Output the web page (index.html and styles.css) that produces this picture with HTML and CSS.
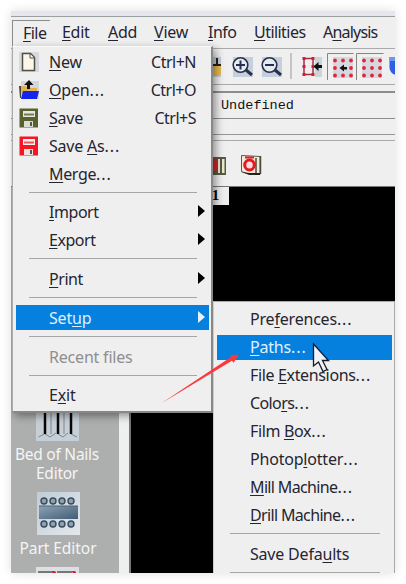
FILE: index.html
```html
<!DOCTYPE html>
<html lang="en">
<head>
<meta charset="utf-8">
<title>Setup paths</title>
<link rel="stylesheet" href="styles.css">
</head>
<body>
<div class="window">
  <div class="titlebar"></div>
  <nav class="menubar">
    <span class="tab open"><u>F</u>ile</span><span class="tab edit"><u>E</u>dit</span><span class="tab add"><u>A</u>dd</span><span class="tab view"><u>V</u>iew</span><span class="tab info"><u>I</u>nfo</span><span class="tab util"><u>U</u>tilities</span><span class="tab ana">A<u>n</u>alysis</span>
  </nav>
  <div class="toolbar">
    <svg width="184" height="35" viewBox="0 0 184 35">
      <rect x="0" y="8" width="8" height="20" fill="#c5ced9"/><path d="M3 9h2v6h3v3H0v-3h3z" fill="#222"/><path d="M0 17h8v8l-3 2H0z" fill="#e9b950"/>
      <g fill="none" stroke="#26304e" stroke-width="1.600"><path fill="#c5d0dc" stroke="none" d="M20 8h20v20H20zM49 8h20v20H49z"/><circle cx="27.500" cy="16" r="7.300" fill="#e6ebf2"/><circle cx="56.500" cy="16" r="7.300" fill="#e6ebf2"/><path d="M23 16h9M27.500 11.500v9M52 16h9" stroke-width="2"/><path d="M33 21l6 5M62 21l6 5" stroke-width="3"/></g>
      <path d="M78 4v26" stroke="#999"/>
      <path d="M102 8h7v20h-7z" fill="#cbd3db"/><path d="M91 9.500h9M91 25.500h9M91 9v17M100 9v17" stroke="#a0303f" stroke-width="1.500"/><path fill="#e51431" d="M89.500 8h3v3h-3zM98.500 8h3v3h-3zM89.500 16h3v3h-3zM98.500 16h3v3h-3zM89.500 24h3v3h-3zM98.500 24h3v3h-3z"/><path d="M100.500 17.500l5-4.500v3h3.500v3h-3.500v3z" fill="#111"/>
      <path d="M114.500 31V4.500h26M143.500 31V4.500h27" stroke="#858585" fill="none"/><path d="M120 8h20v21h-20zM149 8h20v21h-20z" fill="#d5d9df"/>
      <g fill="#e4243c"><circle cx="122" cy="11.500" r="1.900"/><circle cx="130" cy="11.500" r="1.900"/><circle cx="138" cy="11.500" r="1.900"/><circle cx="122" cy="19" r="1.900"/><circle cx="138" cy="19" r="1.900"/><circle cx="122" cy="26.500" r="1.900"/><circle cx="130" cy="26.500" r="1.900"/><circle cx="138" cy="26.500" r="1.900"/><circle cx="151" cy="11.500" r="1.900"/><circle cx="159" cy="11.500" r="1.900"/><circle cx="167" cy="11.500" r="1.900"/><circle cx="151" cy="19" r="1.900"/><circle cx="159" cy="19" r="1.900"/><circle cx="167" cy="19" r="1.900"/><circle cx="151" cy="26.500" r="1.900"/><circle cx="159" cy="26.500" r="1.900"/><circle cx="167" cy="26.500" r="1.900"/></g>
      <path d="M126.500 19l4.500-3.500V18h3v2.500h-3v2z" fill="#111"/><path d="M176.500 8h7.500v18c-4 0-7.500-3-7.500-8z" fill="#2f5fe0"/><path d="M176.500 8h7.500v4h-7.500z" fill="#6e96ee"/>
    </svg>
  </div>
  <div class="gap-a"></div>
  <div class="field">Undefined</div>
  <div class="gap-b"></div>
  <div class="gap-c"></div>
  <div class="toolbar-2">
    <svg width="60" height="45" viewBox="0 0 60 45">
      <path d="M0 16h13v18H0z" fill="#555b47"/><path d="M5 18h2v14H5zM9 18h2.500v14H9z" fill="#efe9cd"/><path d="M0 17c6 0 6 14 0 14z" fill="#d9242b"/>
      <path d="M28.500 14.500v16l8 3h10.500v-18z" fill="#f2eadb" stroke="#555b47"/><path d="M43 17v15M47.500 15v18" stroke="#474d38" stroke-width="1.500"/><path d="M28 31l9 3h10v-2H37z" fill="#222"/><ellipse cx="36.500" cy="24" rx="4.800" ry="5" fill="#f7dddd" stroke="#e61820" stroke-width="3"/><path d="M32 15.500h9v2h-9z" fill="#e61820"/>
    </svg>
  </div>
  <div class="workspace">
    <aside class="sidebar">
      <svg width="43" height="42" viewBox="0 0 43 42"><path d="M0 0h43v42H0z" fill="#c7cfd6"/><path d="M8.500 35l-6 3M9 35l5 3 6-4M22 35l5 3 5-4M35 35l6 3M15 0v35M28 0v35" fill="none" stroke="#7b8790" stroke-width="1"/><path d="M9 0v35M22 0v35M35 0v35" stroke="#080808" stroke-width="2.500"/></svg>
      <div class="caption nails">Bed of Nails<br>Editor</div>
      <svg class="chip" width="43" height="43" viewBox="0 0 43 43"><defs><linearGradient id="paper" x2="1" y2="1"><stop stop-color="#c0ccd7"/><stop offset="1" stop-color="#e4e8ec"/></linearGradient><linearGradient id="body" x2="1" y2="1"><stop stop-color="#8ca2b5"/><stop offset="1" stop-color="#415c75"/></linearGradient></defs><path d="M0 0h43v43H0z" fill="url(#paper)"/><path d="M2 14h39v13H2z" fill="url(#body)"/><path d="M2 14h39" stroke="#50606c"/><g fill="#8da1b1" stroke="#364b5e" stroke-width="1.400"><circle cx="7" cy="9" r="3"/><circle cx="16" cy="9" r="3"/><circle cx="25" cy="9" r="3"/><circle cx="34" cy="9" r="3"/><circle cx="7" cy="32" r="3"/><circle cx="16" cy="32" r="3"/><circle cx="25" cy="32" r="3"/><circle cx="34" cy="32" r="3"/></g></svg>
      <div class="caption part">Part Editor</div>
      <svg class="last" width="43" height="7" viewBox="0 0 43 7"><path d="M0 0h43v7H0z" fill="#dce0e2"/><path d="M2 4h16v3H2zM21 4h15v3H21z" fill="#777"/><path d="M16 4h3l2 3h-4zM36 4h3l2 3h-4z" fill="#e51728"/></svg>
    </aside>
    <div class="splitter"></div>
    <main class="canvas"><span class="layer">1</span></main>
  </div>

  <div class="menu file-menu">
    <div class="item"><svg class="icon" viewBox="0 0 20 20"><path d="M0 0h20v20H0z" fill="#d6dadd"/><path d="M3.500 1.500h8l4 4v13h-12z" fill="#fcf5e8" stroke="#50504a" stroke-width="1.500"/><path d="M11 2v4h4" fill="#fff" stroke="#50504a"/></svg><span class="name"><u>N</u>ew</span><kbd>Ctrl+N</kbd></div>
    <div class="item"><svg class="icon" viewBox="0 0 20 20"><path d="M2 1h18v18H2z" fill="#d1d6df"/><path d="M1 6h6l2 2h9v8H3z" fill="#dfb44d"/><path d="M0 6h2v12H1z" fill="#4a4532"/><path d="M4 11h16l-2 8H2z" fill="#1523ee"/><path d="M10 0l4.500 5H11v4H8V5H5z" fill="#111"/></svg><span class="name"><u>O</u>pen<b>...</b></span><kbd>Ctrl+O</kbd></div>
    <div class="item"><svg class="icon" viewBox="0 0 20 20"><path d="M.5.500h18.500v19H.5z" fill="#59612e"/><path d="M4 3h12v6H4z" fill="#e5e8df"/><path d="M5 5.500h10v2H5z" fill="#747d4c"/><path d="M5 13h9v6H5z" fill="#dcded4"/><path d="M11 14h2v4h-2z" fill="#555"/></svg><span class="name"><u>S</u>ave</span><kbd>Ctrl+S</kbd></div>
    <div class="item"><svg class="icon" viewBox="0 0 20 20"><path d="M.5.500h18.500v19H.5z" fill="#f51525"/><path d="M4 3h12v6H4z" fill="#faf3ee"/><path d="M5 5.500h10v2H5z" fill="#f54e57"/><path d="M5 13h9v6H5z" fill="#eee4db"/><path d="M11 14h2v4h-2z" fill="#555"/></svg><span class="name">Save <u>A</u>s<b>...</b></span></div>
    <div class="item"><span class="name merge"><u>M</u>erge<b>...</b></span></div>
    <hr>
    <div class="item"><span class="name import"><u>I</u>mport</span><i class="arrow"></i></div>
    <div class="item"><span class="name import"><u>E</u>xport</span><i class="arrow"></i></div>
    <hr>
    <div class="item"><span class="name import"><u>P</u>rint</span><i class="arrow"></i></div>
    <hr>
    <div class="item active"><span class="name">Set<u>u</u>p</span><i class="arrow"></i></div>
    <hr>
    <div class="item disabled"><span class="name">Recent files</span></div>
    <hr>
    <div class="item"><span class="name">E<u>x</u>it</span></div>
  </div>

  <div class="menu setup-menu">
    <div class="item"><span class="name">Pre<u>f</u>erences<b>...</b></span></div>
    <div class="item active"><span class="name"><u>P</u>aths<b>...</b></span></div>
    <div class="item"><span class="name ext">File <u>E</u>xtensions<b>...</b></span></div>
    <div class="item"><span class="name colors">Colo<u>r</u>s<b>...</b></span></div>
    <div class="item"><span class="name ext">Film <u>B</u>ox<b>...</b></span></div>
    <div class="item"><span class="name">Photop<u>l</u>otter<b>...</b></span></div>
    <div class="item"><span class="name mill"><u>M</u>ill Machine<b>...</b></span></div>
    <div class="item"><span class="name mill"><u>D</u>rill Machine<b>...</b></span></div>
    <hr>
    <div class="item"><span class="name">Save Defa<u>u</u>lts</span></div>
    <hr>
  </div>
  <svg class="pointer-layer" width="384" height="562" viewBox="11 11 384 562"><path d="M161 403.500L231 357l-1-2 9-.2-5.500 8-1.500-2z" fill="#fb383c"/><path d="M313.500 344v22l5-4 4.500 9.500 4-2-4.500-9h6z" fill="#f1f2f5" stroke="#151a29" stroke-width="1.300"/></svg>
</div>
</body>
</html>
```
FILE: styles.css
```css
* { box-sizing: border-box; }
body { margin: 0; padding: 11px; background: #fff; font: 16px/20px "Noto Sans", sans-serif; letter-spacing: -.2px; color: #252530; }
b { font-weight: inherit; letter-spacing: .9px; }
u { text-decoration-thickness: 1px; text-underline-offset: 2px; text-decoration-skip-ink: none; }
svg { display: block; flex: none; }
.window { position: relative; width: 384px; height: 562px; overflow: hidden; background: #f0eff0; display: flex; flex-direction: column; }
body::before { content: ""; position: absolute; left: 11px; top: 11px; width: 384px; height: 562px; box-shadow: 0 0 10px #0002; }
.titlebar { height: 6px; background: #e7e6ee; border-bottom: 1px solid #9a9f9f; }
.menubar { height: 31px; display: flex; padding: 3px 0 0 1px; white-space: nowrap; letter-spacing: -.55px; }
.tab { width: 45px; padding: 2px 0 0 6px; }
.tab.open { width: 38px; padding: 2px 0 0 10px; border: solid #8c8c8c; border-width: 1px 0 0 1px; }
.tab.edit { width: 52px; padding-left: 12px; letter-spacing: -.3px; }
.tab.add { width: 46px; letter-spacing: -.3px; }
.tab.view { width: 54px; letter-spacing: -.2px; }
.tab.info { width: 46px; }
.tab.util { width: 69px; }
.tab.ana { letter-spacing: -.8px; }
.toolbar { height: 37px; border: solid #aaa; border-width: 1px 0; padding-left: 202px; }
.gap-a { height: 6px; }
.field { height: 28px; border: solid #8d8d8d; border-width: 2px 0 1px; padding: 4px 0 0 210px; font: 13.5px/17px "Liberation Mono", monospace; letter-spacing: 0; color: #111; }
.gap-b { height: 16px; border-bottom: 1px solid #969696; }
.gap-c { height: 6px; border-bottom: 1px solid #aaa; }
.toolbar-2 { height: 46px; padding-left: 202px; border-bottom: 1px solid #777; }
.workspace { display: flex; flex: 1; min-height: 0; }
.sidebar { width: 108px; background: #adaeae; color: #f5f5f5; display: flex; flex-direction: column; align-items: center; padding: 212px 16px 0 0; overflow: hidden; }
.caption { width: 94px; text-align: center; font-size: 15.5px; line-height: 19px; letter-spacing: -.25px; white-space: nowrap; margin-top: 4px; }
.caption.part { letter-spacing: -.05px; margin-left: 2px; }
.chip { margin: 9px 0 0 2px; }
.last { margin-top: 9px; }
.splitter { width: 12px; background: #f0eff0; border-right: 2px solid #777; }
.canvas { flex: 1; background: #000; }
.layer { display: block; width: 98px; height: 18px; background: #eee; text-align: right; padding-right: 10px; font: bold 15px/17px "Liberation Serif", serif; color: #000; }
.menu { position: absolute; background: #f0eff0; white-space: nowrap; }
.file-menu { left: 1px; top: 35px; width: 201px; height: 367px; padding: .5px 2px 0 3px; border: solid #aaa; border-width: 1px 2px 2px 1px; border-top-color: #fafafa; border-right-color: #888; border-bottom-color: #888; box-shadow: 3px 3px 8px #0006; }
.setup-menu { left: 202px; top: 290px; width: 182px; height: 280px; padding: 3px 2px 0 3px; border: 1px solid #aaa; border-left-color: #ccc; }
.setup-menu { height: 272px; overflow: hidden; border-bottom: 0; }
.item { height: 28px; display: flex; align-items: center; }
.name { margin: 0 0 0 33px; flex: 1; }
.icon { width: 20px; height: 20px; margin-left: 3px; }
.icon + .name { margin-left: 10px; }
.merge { letter-spacing: -.35px; }
.import { letter-spacing: -.45px; }
.ext { letter-spacing: -.35px; }
.colors { letter-spacing: -.6px; }
.mill { letter-spacing: -.65px; }
kbd { font: inherit; letter-spacing: -.5px; margin: 0 13px 0 0; }
hr { border: 0; margin: 4px 12px 5.75px 13px; height: 1px; background: #a5a7a5; }
.arrow { border: solid transparent; border-width: 6px 0 6px 7px; border-left-color: #000; margin: -2px 4px 0 0; }
.active { color: #e0f0ff; background: linear-gradient(#0580de, #0580de) 0 50% / 100% 25px no-repeat; }
.active .arrow { border-left-color: #e8f2fa; }
.disabled { color: #8e8e8e; }
.pointer-layer { position: absolute; left: 0; top: 0; }
```
